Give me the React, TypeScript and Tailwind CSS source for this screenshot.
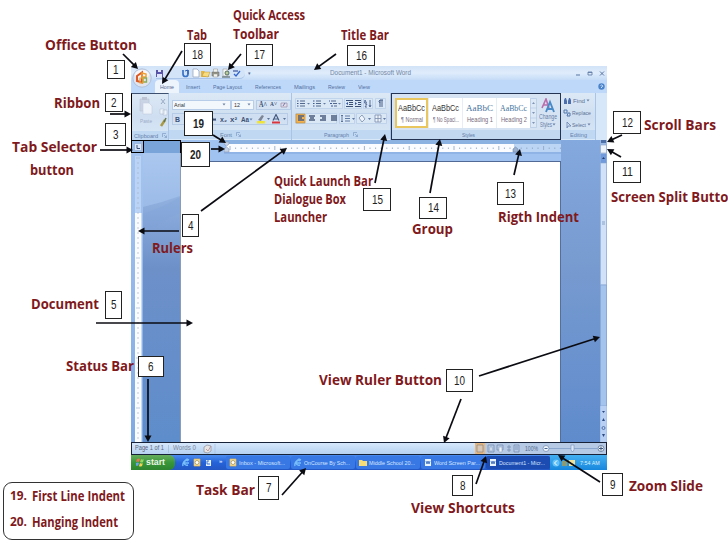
import type { ReactNode } from 'react';
import { clsx } from 'clsx';

type FitProps = { text: string; w: number; size: number; weight?: number; family?: string; className?: string };
type Label = { text: string; x: number; y: number; w: number };
type NumberBox = { n: string; x: number; y: number; w: number; h: number; bold?: boolean };
type IconProps = { children: ReactNode; w?: number; h?: number };

const labels: Label[] = [
  { text: 'Office Button', x: 45, y: 45, w: 92 },
  { text: 'Tab', x: 187, y: 35, w: 20 },
  { text: 'Quick Access', x: 233, y: 15, w: 72 },
  { text: 'Toolbar', x: 233, y: 34, w: 46 },
  { text: 'Title Bar', x: 341, y: 35, w: 48 },
  { text: 'Ribbon', x: 54, y: 103, w: 46 },
  { text: 'Tab Selector', x: 12, y: 147, w: 85 },
  { text: 'button', x: 30, y: 170, w: 44 },
  { text: 'Quick Launch Bar', x: 274, y: 181, w: 99 },
  { text: 'Dialogue Box', x: 274, y: 199, w: 72 },
  { text: 'Launcher', x: 274, y: 217, w: 53 },
  { text: 'Group', x: 412, y: 229, w: 41 },
  { text: 'Rigth Indent', x: 498, y: 217, w: 81 },
  { text: 'Scroll Bars', x: 644, y: 125, w: 72 },
  { text: 'Screen Split Button', x: 611, y: 197, w: 126 },
  { text: 'Rulers', x: 152, y: 248, w: 41 },
  { text: 'Document', x: 31, y: 304, w: 68 },
  { text: 'Status Bar', x: 66, y: 366, w: 68 },
  { text: 'View Ruler Button', x: 319, y: 380, w: 123 },
  { text: 'Task Bar', x: 196, y: 490, w: 59 },
  { text: 'View Shortcuts', x: 411, y: 508, w: 104 },
  { text: 'Zoom Slide', x: 629, y: 486, w: 74 }
];

const boxes: NumberBox[] = [
  { n: '1', x: 107, y: 60, w: 18, h: 19 },
  { n: '2', x: 105, y: 93, w: 18, h: 19 },
  { n: '3', x: 105, y: 123, w: 21, h: 23 },
  { n: '4', x: 182, y: 214, w: 17, h: 23 },
  { n: '5', x: 105, y: 291, w: 17, h: 28 },
  { n: '6', x: 138, y: 356, w: 26, h: 21 },
  { n: '7', x: 258, y: 476, w: 21, h: 24 },
  { n: '8', x: 452, y: 475, w: 21, h: 21 },
  { n: '9', x: 602, y: 473, w: 21, h: 23 },
  { n: '10', x: 446, y: 369, w: 27, h: 23 },
  { n: '11', x: 613, y: 161, w: 28, h: 22 },
  { n: '12', x: 613, y: 111, w: 28, h: 23 },
  { n: '13', x: 497, y: 182, w: 27, h: 23 },
  { n: '14', x: 419, y: 197, w: 28, h: 22 },
  { n: '15', x: 363, y: 188, w: 28, h: 23 },
  { n: '16', x: 347, y: 45, w: 28, h: 21 },
  { n: '17', x: 246, y: 44, w: 27, h: 22 },
  { n: '18', x: 184, y: 43, w: 27, h: 23 },
  { n: '19', x: 184, y: 111, w: 29, h: 25, bold: true },
  { n: '20', x: 181, y: 142, w: 29, h: 25, bold: true }
];

// x1, y1 is the tail and x2, y2 the tip
const arrows: number[][] = [
  [123, 54, 138, 69],
  [182, 51, 162, 84],
  [241, 54, 228, 70],
  [336, 54, 314, 70],
  [110, 114, 131, 114],
  [100, 150, 133, 150],
  [213, 135, 226, 143],
  [211, 149, 225, 149],
  [201, 211, 287, 148],
  [179, 231, 138, 231],
  [96, 323, 193, 323],
  [148, 379, 148, 442],
  [282, 495, 306, 468],
  [476, 484, 486, 456],
  [600, 482, 558, 455],
  [461, 399, 444, 443],
  [479, 376, 600, 337],
  [621, 157, 607, 149],
  [622, 135, 607, 142],
  [514, 175, 520, 149],
  [430, 193, 440, 139],
  [375, 183, 385, 134]
];

const tabs = [
  { text: 'Insert', w: 14, gap: 'ml-[7px]' },
  { text: 'Page Layout', w: 29, gap: 'ml-[13px]' },
  { text: 'References', w: 26, gap: 'ml-[13px]' },
  { text: 'Mailings', w: 21, gap: 'ml-[13px]' },
  { text: 'Review', w: 17, gap: 'ml-[13px]' },
  { text: 'View', w: 12, gap: 'ml-[13px]' }
];

const styles = [
  { name: '¶ Normal', sample: 'AaBbCc', active: true },
  { name: '¶ No Spaci...', sample: 'AaBbCc' },
  { name: 'Heading 1', sample: 'AaBbC', heading: true },
  { name: 'Heading 2', sample: 'AaBbCc', heading: true }
];

const tasks = [
  { text: 'Inbox - Microsoft...', icon: 'outlook' },
  { text: 'OnCourse By Sch...', icon: 'ie' },
  { text: 'Middle School 20...', icon: 'folder' },
  { text: 'Word Screen Par...', icon: 'word' },
  { text: 'Document1 - Micr...', icon: 'word', active: true }
];

const ctx = document.createElement('canvas').getContext('2d')!;

// Squeezes a line of text into an exact width
function Fit({ text, w, size, weight = 400, family = 'Liberation Sans', className }: FitProps) {
  ctx.font = `${weight} ${size}px "${family}"`;
  const scale = w / ctx.measureText(text).width;
  return (
    <span className="block shrink-0" style={{ width: w }}>
      <span
        className={clsx('block w-max origin-left whitespace-pre leading-none', className)}
        style={{ fontFamily: `"${family}", sans-serif`, fontSize: size, fontWeight: weight, transform: `scaleX(${scale})` }}
      >
        {text}
      </span>
    </span>
  );
}

function Icon({ children, w = 8, h = 8 }: IconProps) {
  return (
    <svg width={w} height={h} viewBox={`0 0 ${w} ${h}`} fill="none" className="block shrink-0">
      {children}
    </svg>
  );
}

export default function App() {
  return (
    <div className="relative h-[546px] w-[728px] overflow-hidden bg-white pl-[131px] pt-[66px] font-['Liberation_Sans',sans-serif]">
      <div className="relative flex h-[404px] w-[476px] flex-col overflow-hidden">
        <TitleBar />
        <TabRow />
        <Ribbon />
        <Workspace />
        <StatusBar />
        <TaskBar />
        <OfficeButton />
      </div>
      <Callouts />
      <Legend />
    </div>
  );
}

function OfficeButton() {
  return (
    <div className="absolute left-px top-0.5">
      <Icon w={20} h={20}>
        <circle cx="10" cy="10" r="9.200" fill="#dfe4ee" stroke="#a7b6d0" strokeWidth=".8" />
        <ellipse cx="10" cy="6.500" rx="7" ry="4.500" fill="#f6f7fb" />
        <path d="M5 8l5-3.500v10L5 13z" stroke="#dc5a26" strokeWidth="2" />
        <path d="M10 5l4 1v3h-4z" stroke="#efa033" strokeWidth="1.500" />
        <path d="M11 10h3.500v4H11z" stroke="#8aac55" strokeWidth="1.300" />
        <path d="M8 10h3v5H8z" stroke="#e9a53c" strokeWidth="1.200" />
      </Icon>
    </div>
  );
}

function TitleBar() {
  return (
    <div className="flex h-[14px] shrink-0 items-center bg-linear-to-b from-[#d2e3f8] via-[#dfecfb] to-[#c5dcf7] pl-[25px] pr-px">
      <div className="flex h-[11px] w-[89px] items-center rounded-r-full border-b border-[#a9c4e8] bg-[#d4e4f8]">
        <Icon w={86} h={10}>
          <path d="M0 2h7v7H0z" fill="#5955a8" />
          <path d="M2 2h3v2H2zM1 6h5v3H1z" fill="#dfe6fa" />
          <path d="M27 2v4a2.500 2.500 0 0 0 5 0V2" stroke="#3973c7" strokeWidth="1.700" />
          <path d="M29 3l3-1v4" stroke="#305cb0" />
          <path d="M37 1h4l2 2v6h-6z" fill="#fff" stroke="#8d9dbb" strokeWidth=".7" />
          <path d="M45 3h3l1 1h4v5h-8z" fill="#e8b63f" />
          <path d="M46 8l2-4h6l-2 5z" fill="#f8dc7d" stroke="#a78230" strokeWidth=".4" />
          <path d="M56 4h7v4h-7z" fill="#9a9a8c" stroke="#666" strokeWidth=".5" />
          <path d="M57.500 1h4v3h-4zM57.500 6h4v3h-4z" fill="#f3f3ee" stroke="#777" strokeWidth=".4" />
          <path d="M67 1h4l1 2v5h-5z" fill="#f7f7f7" stroke="#777" strokeWidth=".4" />
          <circle cx="71" cy="5" r="2" fill="#b8cc9c" stroke="#3f5850" strokeWidth=".8" />
          <path d="M66 9h8" stroke="#455" />
          <path d="M77 3h5" stroke="#475ba0" strokeWidth="1.300" />
          <path d="M78 6l2 2 4-5" stroke="#3566cc" strokeWidth="1.300" />
        </Icon>
      </div>
      <span className="ml-[3px] w-[82px] text-[5px] leading-none text-[#4d6a98]">▾</span>
      <Fit text="Document1 - Microsoft Word" w={81} size={7.5} className="text-[#7487a5]" />
      <span className="ml-auto">
        <Icon w={34} h={9}>
          <path d="M4 6h4" stroke="#5b76a3" />
          <path d="M16 3h4v3h-4zM16 3.500h4" stroke="#5b76a3" strokeWidth=".8" />
          <path d="M28 2.500l4 4m0-4l-4 4" stroke="#5b76a3" />
        </Icon>
      </span>
    </div>
  );
}

function TabRow() {
  return (
    <div className="flex h-[13px] shrink-0 items-center bg-[#bdd8f9] pl-6">
      <div className="flex h-[13px] w-[24px] items-center justify-center rounded-t-sm bg-[#edf4fc]">
        <Fit text="Home" w={14} size={6} className="text-[#53678d]" />
      </div>
      {tabs.map((tab) => (
        <div key={tab.text} className={tab.gap}>
          <Fit text={tab.text} w={tab.w} size={6} className="text-[#54709f]" />
        </div>
      ))}
      <span className="ml-auto mr-0.5">
        <Icon w={7} h={7}>
          <circle cx="3.500" cy="3.500" r="3.200" fill="#4a83c9" />
          <path d="M2.500 2.500q1-1 2 0t-1 1.500v1" stroke="#e4f0ff" strokeWidth=".8" />
        </Icon>
      </span>
    </div>
  );
}

function Group({ title, w, className, children }: { title: string; w: number; className: string; children: ReactNode }) {
  return (
    <div className={clsx('flex h-[47px] shrink-0 flex-col border-r border-[#a9c5e5]', className)}>
      <div className="h-[37px]">{children}</div>
      <div className="flex h-[9px] items-center justify-center bg-[#c0d8f1]">
        <Fit text={title} w={w} size={6} className="text-[#6582ad]" />
        {title !== 'Editing' && (
          <span className="ml-1">
            <Icon w={5} h={5}>
              <path d="M.5 4V.500H4M2 2l2.500 2.500V2.500M4.500 4.500h-2" stroke="#7f9cc6" strokeWidth=".7" />
            </Icon>
          </span>
        )}
      </div>
    </div>
  );
}

function Ribbon() {
  return (
    <div className="flex h-[47px] shrink-0 bg-linear-to-b from-[#dce8f5] via-[#cfdff1] to-[#d9e8f8]">
      <Group title="Clipboard" w={24} className="w-[38px] border-l border-l-black border-t border-t-[#3d506f]">
        <div className="flex gap-1.5 pl-[7px] pt-[3px]">
          <div className="flex flex-col items-center gap-0.5 opacity-60">
            <Icon w={14} h={19}>
              <path d="M1 2h9v12H1z" fill="#c3c9dc" stroke="#a6afc5" strokeWidth=".6" />
              <path d="M3 0h5v3H3z" fill="#a9afbf" />
              <path d="M4 6h6l3 3v8H4z" fill="#fff" stroke="#b9c1d3" strokeWidth=".6" />
            </Icon>
            <Fit text="Paste" w={12} size={6} className="text-[#7a89a6]" />
          </div>
          <Icon w={9} h={32}>
            <path d="M2 2l4 5M6 2L2 7" stroke="#98a8c4" />
            <path d="M1 12h4v5H1zM4 13h4v5H4z" fill="#f0f5fc" stroke="#b3bfd4" strokeWidth=".6" />
            <path d="M2 29l4-6" stroke="#a99a45" strokeWidth="2.500" />
            <path d="M5 25l2-4" stroke="#62754e" strokeWidth="1.500" />
          </Icon>
        </div>
      </Group>
      <Group title="Font" w={12} className="w-[123px]">
        <div className="flex h-[19px] items-center pl-[3px] pt-1">
          <div className="flex h-[10px] w-[61px] items-center justify-between border border-[#b8cde8] bg-[#f3f8fd] pl-px pr-1">
            <Fit text="Arial" w={11} size={6} className="text-[#333]" />
            <Chevron />
          </div>
          <div className="flex h-[10px] w-[23px] items-center justify-between border border-[#b8cde8] bg-[#f3f8fd] px-0.5">
            <Fit text="12" w={6} size={6} className="text-[#333]" />
            <Chevron />
          </div>
          <div className="ml-0.5 flex items-center gap-[3px] border border-[#b6cbe6] px-0.5 text-[#3b4e70]">
            <Fit text="A˄" w={8} size={8} weight={700} family="Liberation Serif" />
            <Fit text="A˅" w={7} size={7} weight={700} family="Liberation Serif" />
            <Icon w={8} h={8}>
              <path d="M1 2h6v4H1z" fill="#e7dce9" stroke="#9a8cab" strokeWidth=".7" />
              <path d="M3 5l2-3" stroke="#657caa" />
            </Icon>
          </div>
        </div>
        <div className="mx-[3px] mt-px flex h-[12px] items-center border border-[#b6cbe6] text-[#3e5276]">
          <Fit text="B" w={5} size={7} weight={700} className="ml-0.5" />
          <span className="w-[34px]" />
          <Fit text="abc" w={6} size={6} weight={700} className="line-through" />
          <span className="w-1" />
          <Fit text="x₂" w={7} size={7} weight={700} />
          <span className="w-1" />
          <Fit text="x²" w={7} size={7} weight={700} />
          <span className="w-1" />
          <Fit text="Aa" w={8} size={7} weight={700} />
          <Chevron />
          <span className="w-0.5" />
          <Icon w={32} h={10}>
            <path d="M2 7h8v2.500H2z" fill="#f0e33a" />
            <path d="M3 6l4-5 2 1-3 5z" fill="#7d8694" />
            <path d="M12 4h3l-1.500 2z" fill="#5a7198" />
            <path d="M17 7.500h8v2h-8z" fill="#d8343d" />
            <path d="M18 6.500l3-6 3 6M19 5h4" stroke="#455a80" strokeWidth="1.200" />
            <path d="M28 4h3l-1.500 2z" fill="#5a7198" />
          </Icon>
        </div>
      </Group>
      <Group title="Paragraph" w={25} className="w-[99px]">
        <ParagraphTools />
      </Group>
      <StyleGallery />
      <Group title="Editing" w={17} className="w-[35px]">
        <div className="flex flex-col gap-[5px] pl-0.5 pt-1 text-[#5c7296]">
          <div className="flex h-[7px] items-center gap-px">
            <Icon w={9} h={8}>
              <path d="M1 7V3l1-2h1l1 3v3zM5 7V4l1-3h1l1 2v4z" fill="#4a6eae" />
            </Icon>
            <Fit text="Find" w={12} size={6} />
            <Chevron />
          </div>
          <div className="flex h-[7px] items-center gap-px">
            <Icon w={8} h={8}>
              <path d="M1 1h3v3H1zM5 4h2v3H4z" stroke="#5376ac" />
            </Icon>
            <Fit text="Replace" w={19} size={6} />
          </div>
          <div className="flex h-[7px] items-center gap-px">
            <Icon w={8} h={8}>
              <path d="M4 1v6l1-2h3z" stroke="#6a83ad" strokeWidth=".8" />
            </Icon>
            <Fit text="Select" w={14} size={6} />
            <Chevron />
          </div>
        </div>
      </Group>
      <div className="flex-1 bg-[#d7e7fa]" />
    </div>
  );
}

function Chevron() {
  return (
    <Icon w={4} h={3}>
      <path d="M.5.500h3L2 2.500z" fill="#6980a5" />
    </Icon>
  );
}

function ParagraphTools() {
  return (
    <div className="pl-[3px] pt-[5px]">
      <Icon w={94} h={31}>
        <path d="M.5.500h47v10H.500zM49.500.500h17v10h-17zM68.500.500h9v10h-9zM80.500.500h10v10h-10z" fill="#dae7f5" stroke="#b5cbe7" strokeWidth=".7" />
        <path d="M5 3h5M5 5.500h5M5 8h5M21 3h5M21 5.500h5M21 8h5M36 3h5M38 5.500h4M39 8h3" stroke="#51678d" />
        <path d="M2 3h1.500M2 5.500h1.500M2 8h1.500M18 3h1.500M18 5.500h1.500M18 8h1.500M34 3h1M35 5.500h2M36 8h2" stroke="#3b5795" />
        <path d="M12 5h3l-1.500 1.500zM28 5h3l-1.500 1.500zM43 5h3l-1.500 1.500z" fill="#607aa4" />
        <path d="M51 2.500h7M54 4.500h4M54 6.500h4M51 8.500h7M60 2.500h6M63 4.500h3M63 6.500h3M60 8.500h6" stroke="#3c5278" />
        <path d="M53 4l-2 1.500 2 1.500zM60 4l2 1.500-2 1.500z" fill="#31569d" />
        <path d="M70 2l1.500 3h-2zM70 6h2l-2 3h2M75 2v7m-1-2l1 2 1-2" stroke="#4c6598" strokeWidth=".9" />
        <path d="M87 2v7m-2-7v7m3-7h-3q-2 1.500 0 3" stroke="#455c88" />
        <path d="M.5 15.500h41v10H.500zM44.500 15.500h15v10h-15zM61.500 15.500h30v10h-30z" fill="#dae7f5" stroke="#b5cbe7" strokeWidth=".7" />
        <path d="M1 16h9v9H1z" fill="#f3b24f" stroke="#ba8738" strokeWidth=".6" />
        <path d="M3 18h6M3 20h4M3 22h6M14 18h6M15 20h4M14 22h6M25 18h6M27 20h4M25 22h6M36 18h6M36 20h6M36 22h6" stroke="#4b5d7f" strokeWidth="1.300" />
        <path d="M47 17v7m-1-6l1-1 1 1m-2 5l1 1 1-1M50 18h5M50 20.500h5M50 23h5" stroke="#526d9d" strokeWidth=".9" />
        <path d="M64 20l3-3 3 4-3 3zM80 17h6v7h-6zM83 17v7M80 20.500h6" fill="#edf3fb" stroke="#798dad" strokeWidth=".8" />
        <path d="M57 20h3l-1.500 2zM73 20h3l-1.500 2zM88 20h3l-1.500 2z" fill="#607aa4" />
      </Icon>
    </div>
  );
}

function StyleGallery() {
  return (
    <div className="flex h-[47px] w-[170px] shrink-0 flex-col border-[1.5px] border-[#243352] bg-[#d5e3f3]">
      <div className="flex h-[36px] pl-[3px] pt-1">
        <div className="flex h-[30px] items-center gap-px bg-[#e5eef8]">
          {styles.map((style) => (
            <div
              key={style.name}
              className={clsx(
                'flex h-[30px] w-[33px] flex-col items-center justify-center gap-[3px] overflow-hidden bg-white',
                style.active && 'border-2 border-[#eac65e]'
              )}
            >
              <Fit
                text={style.sample}
                w={27}
                size={9}
                family={style.heading ? 'Liberation Serif' : 'Liberation Sans'}
                className={style.heading ? 'text-[#45739d]' : 'text-[#333]'}
              />
              <Fit text={style.name} w={style.active ? 22 : 26} size={7} className="text-[#776b7c]" />
            </div>
          ))}
        </div>
        <Icon w={7} h={30}>
          <path d="M.500.500h6v29h-6zM0 10h7M0 20h7" fill="#dce8f6" stroke="#b4c9e3" strokeWidth=".7" />
          <path d="M2 6l1.500-2L5 6zM2 14l1.500 2L5 14zM2 24h3l-1.500 2z" fill="#8095b6" />
        </Icon>
        <div className="flex w-[22px] flex-col items-center text-[#6880a6]">
          <Icon w={15} h={16}>
            <path d="M1 10L5 1l3 9M2 7h5" stroke="#ba6dab" strokeWidth="1.600" />
            <path d="M5 14l4-10 4 10M6.500 11h5" stroke="#4889c7" strokeWidth="1.900" />
          </Icon>
          <Fit text="Change" w={18} size={6.500} />
          <div className="mt-px flex items-center">
            <Fit text="Styles" w={12} size={6.500} />
            <Chevron />
          </div>
        </div>
      </div>
      <div className="flex flex-1 items-center justify-center bg-[#c2d8f0]">
        <Fit text="Styles" w={13} size={6} className="text-[#607ba6]" />
        <span className="w-4" />
      </div>
    </div>
  );
}

function Workspace() {
  const ticks = Array.from({ length: 75 }, (_, i) => i);
  return (
    <div className="flex h-[302px] shrink-0 bg-linear-to-b from-[#8db1e2] from-0% via-[#7295cd] via-38% to-[#5f8fce]">
      <div className="flex w-[50px] flex-col">
        <div className="flex h-[13px] border-t border-black">
          <div className="flex w-[13px] items-center justify-center border border-t-0 border-black bg-[#9dbde9]">
            <Icon w={8} h={8}>
              <path d="M.5.500h7v7h-7z" fill="#d8e6f8" stroke="#92aed5" strokeWidth=".7" />
              <path d="M3 2v3.500h3" stroke="#394c77" />
            </Icon>
          </div>
          <div className="flex-1 border-r border-black bg-[#79a4da]" />
        </div>
        <div className="flex flex-1">
          <div className="w-3 bg-linear-to-b from-[#a5c5f0] to-[#7faae2]">
            <svg width="12" height="289" viewBox="0 0 12 289">
              <path d="M4 3h6v57H4z" fill="#bbd3f4" />
              <path d="M4 60h6v229H4z" fill="#fafcff" />
              <path d="M10.500 60v229" stroke="#c5daf5" />
              {ticks.slice(0, 57).map((i) => (
                <path key={i} d={`M${i % 10 === 0 ? 5 : 6} ${i * 5 + 5}h${i % 10 === 0 ? 4 : 2}`} stroke="#a5b5cb" strokeWidth=".7" />
              ))}
            </svg>
          </div>
          <div className="flex-1 border-r border-[#8d9cb3] bg-linear-to-b from-[#a8c5ed] from-0% via-[#6d90c9] via-40% to-[#5e8dcb]">
            <svg width="37" height="85">
              <path d="M0 85V61Q20 54 37 44V60Q20 66 0 85" fill="#7da2d7" opacity=".3" />
              <path d="M0 0h37v43Q18 50 0 54z" fill="#acc9f1" opacity=".5" />
            </svg>
          </div>
        </div>
      </div>
      <div className="flex w-[380px] flex-col">
        <div className="h-[22px] border-b border-[#526b96] bg-[#a0c2f0] pl-[43px]">
          <svg width="337" height="21" viewBox="0 0 337 21">
            <path d="M0 0h337v4H0z" fill="#8bb2e0" />
            <path d="M2 4h288v8H2z" fill="#fafcff" />
            <path d="M290 4h47v8h-47z" fill="#bcd5f5" />
            <path d="M0 13h337" stroke="#80a5db" />
            {ticks.slice(0, 60).map((i) => (
              <path key={i} d={`M${i * 5.6 + 6} ${i % 8 === 0 ? 6 : 7.5}v${i % 8 === 0 ? 4 : 1.5}`} stroke="#8ca1bf" strokeWidth=".8" />
            ))}
            <path d="M0 2h5v2L2.500 6 0 4zM0 12V9l2.500-2L5 9v3z" fill="#c7d3e7" stroke="#8496b5" strokeWidth=".6" />
            <path d="M289 12V9l2.500-2L294 9v3z" fill="#9bb0cf" stroke="#7187a8" strokeWidth=".6" />
          </svg>
        </div>
        <div className="flex-1 border-r-[1.5px] border-[#526f9e] bg-white" />
      </div>
      <div className="w-[39px] bg-linear-to-b from-[#84a9df] from-0% via-[#789bd0] via-40% to-[#5f8bcc]" />
      <div className="w-[7px] bg-[#99b9e5]">
        <svg width="7" height="302" viewBox="0 0 7 302">
          <path d="M1 0h5v3H1z" fill="#4d70a8" />
          <path d="M.5 5h6v8h-6z" fill="#edf4fc" stroke="#879fc3" strokeWidth=".6" />
          <path d="M.5 14h6v9h-6z" fill="#709adb" />
          <path d="M2 19l1.500-2L5 19z" fill="#223d70" />
          <path d="M.5 23h6v122h-6z" fill="#d1e2f8" stroke="#8ca9d1" strokeWidth=".6" />
          <path d="M2 82h3M2 84h3" stroke="#6586b7" strokeWidth=".7" />
          <path d="M.5 145h6v121h-6z" fill="#a4c3ed" stroke="#7c9ecf" strokeWidth=".6" />
          <path d="M.5 266h6v36h-6z" fill="#b7d0f4" />
          <path d="M2 271h3l-1.500 2zM2 281l1.500-3L5 281zM2 294h3l-1.500 3z" fill="#304c83" />
          <circle cx="3.500" cy="288" r="1.500" stroke="#3d5e95" fill="none" strokeWidth=".8" />
        </svg>
      </div>
    </div>
  );
}

function StatusBar() {
  return (
    <div className="flex h-[13px] shrink-0 items-center border border-[#172138] bg-linear-to-b from-[#d6e8fb] to-[#b6d1f1] pl-[3px]">
      <Fit text="Page 1 of 1" w={29} size={6.5} className="text-[#5b6679]" />
      <span className="mx-1 h-2 w-px bg-[#abc3df]" />
      <Fit text="Words 0" w={23} size={6.5} className="text-[#7b8799]" />
      <span className="ml-[7px]">
        <Icon w={13} h={10}>
          <path d="M1 3l3-2 4 1v5l-3 2-4-1z" fill="#e8e5e5" stroke="#8a8e9b" strokeWidth=".7" />
          <path d="M3 5l2 2 3-5" stroke="#b58a92" strokeWidth=".8" />
          <path d="M12 0v10" stroke="#a8bfdd" strokeWidth=".7" />
        </Icon>
      </span>
      <div className="ml-auto flex h-[11px] items-center bg-[#b6cae6]">
        <Icon w={46} h={11}>
          <path d="M0 0h10v11H0z" fill="#e4b783" />
          <path d="M2 2h6v7H2z" fill="#d8c6b6" stroke="#8d867e" strokeWidth=".7" />
          <path d="M13 2h6v7h-6zM22 2h6v5h-6zM34 2v7m-2-5h4m-4 3h4M39 2h5v7h-5zM40 4h3M40 6h3" stroke="#788eae" strokeWidth=".8" />
          <path d="M15 4h2v4h-2zM24 4h3v5h-3z" fill="#f0f4fb" stroke="#8da3bf" strokeWidth=".6" />
        </Icon>
        <span className="w-1" />
        <Fit text="100%" w={13} size={7} className="text-[#526786]" />
        <Icon w={68} h={11}>
          <path d="M11 5.500h48" stroke="#8ca7cd" />
          <circle cx="8" cy="5.500" r="3" fill="#eff5fc" stroke="#6e87aa" strokeWidth=".7" />
          <path d="M6.500 5.500h3" stroke="#46648e" />
          <path d="M33 2h3v5l-1.500 2L33 7z" fill="#dce8f8" stroke="#819bc1" strokeWidth=".7" />
          <circle cx="63" cy="5.500" r="3" fill="#eff5fc" stroke="#566e90" strokeWidth=".8" />
          <path d="M61 5.500h4M63 3.500v4" stroke="#3c557c" />
        </Icon>
      </div>
    </div>
  );
}

function TaskIcon({ name }: { name: string }) {
  return (
    <Icon w={8} h={9}>
      {name === 'ie' && <path d="M7 5H2q1 3 4 2M1 8q-1-4 4-7l2 1M2 5q1-4 4-2" stroke="#78bdfa" strokeWidth="1.400" />}
      {name === 'outlook' && (
        <>
          <path d="M1 1h6v7H1z" fill="#f2dfa1" stroke="#e8b54c" strokeWidth=".7" />
          <circle cx="4" cy="4.500" r="2" fill="#fff" stroke="#8e8660" strokeWidth=".7" />
        </>
      )}
      {name === 'folder' && <path d="M0 2h3l1 1h4v5H0z" fill="#f4dd79" />}
      {name === 'desktop' && (
        <>
          <path d="M2 2h5v6H2z" fill="#e4f1ff" />
          <path d="M5 3H3v3h3" stroke="#3f74cd" />
        </>
      )}
      {name === 'word' && (
        <>
          <path d="M1 1h6v7H1z" fill="#e9f4ff" />
          <path d="M2 3l1 3 1-3 1 3 1-3" stroke="#2d62b4" strokeWidth=".8" />
        </>
      )}
    </Icon>
  );
}

function TaskBar() {
  return (
    <div className="flex h-[15px] shrink-0 items-center bg-linear-to-b from-[#4b8cf0] via-[#2563d9] to-[#2457c4]">
      <div className="flex h-[15px] w-11 items-center gap-px rounded-r-md bg-linear-to-b from-[#67ae5d] via-[#38973a] to-[#2e842f] pl-[5px]">
        <Icon w={9} h={9}>
          <path d="M1 1q2-1 3 0L3 4Q2 3 0 4z" fill="#ec7253" />
          <path d="M5 1q2 1 3 0L7 4Q6 5 4 4z" fill="#94d861" />
          <path d="M0 5q2-1 3 0L2 8Q1 7 0 8z" fill="#69a5ef" />
          <path d="M4 5q2 1 3 0L6 8Q4 9 3 8z" fill="#f1d34f" />
        </Icon>
        <Fit text="start" w={19} size={9} weight={700} className="-mt-px text-[#edf5e6]" />
      </div>
      <div className="flex w-[51px] items-center gap-[3px] pl-[7px]">
        <TaskIcon name="ie" />
        <TaskIcon name="outlook" />
        <TaskIcon name="desktop" />
        <span className="-mt-1 ml-1 text-[6px] leading-none text-white">»</span>
      </div>
      <div className="flex gap-px">
        {tasks.map((task) => (
          <div
            key={task.text}
            className={clsx(
              'flex h-[13px] w-16 items-center gap-0.5 rounded-xs pl-[3px]',
              task.active ? 'bg-[#1c4bb2]' : 'bg-[#3778e5]'
            )}
          >
            <TaskIcon name={task.icon} />
            <Fit text={task.text} w={46} size={6} className="text-[#d4e5ff]" />
          </div>
        ))}
      </div>
      <div className="flex h-[15px] flex-1 items-center justify-end gap-1 bg-linear-to-b from-[#43aff1] to-[#1687dd] pr-[7px]">
        <Icon w={25} h={10}>
          <circle cx="5" cy="5" r="3.500" fill="#63c2f7" />
          <path d="M6 2.500L3.500 5 6 7.500" stroke="#fff" />
          <path d="M11 3h5v5h-5z" fill="#8b9b74" />
          <path d="M18 2h6v6h-6z" fill="#eee19a" />
        </Icon>
        <Fit text="7:54 AM" w={20} size={6} className="text-[#dbf2ff]" />
      </div>
    </div>
  );
}

function Callouts() {
  return (
    <>
      <svg className="pointer-events-none absolute inset-0" width="728" height="546" viewBox="0 0 728 546">
        {arrows.map(([x1, y1, x2, y2]) => {
          const angle = (Math.atan2(y2 - y1, x2 - x1) * 180) / Math.PI;
          const len = Math.hypot(x2 - x1, y2 - y1);
          return (
            <g key={`${x1}-${y1}`} transform={`translate(${x2} ${y2}) rotate(${angle})`}>
              <path d={`M${-len} 0H-4`} stroke="#0b0b12" strokeWidth="1.700" />
              <path d="M0 0L-6.500-3.500V3.500z" fill="#0b0b12" />
            </g>
          );
        })}
      </svg>
      {boxes.map((box) => (
        <div
          key={box.n}
          className="absolute flex items-center justify-center border border-[#222] bg-white"
          style={{ left: box.x, top: box.y, width: box.w, height: box.h }}
        >
          <Fit text={box.n} w={box.n.length * 5.5} size={12} weight={box.bold ? 700 : 400} className="text-[#222]" />
        </div>
      ))}
      {labels.map((label) => (
        <div key={label.text} className="absolute" style={{ left: label.x, top: label.y - 7 }}>
          <Fit text={label.text} w={label.w} size={14} weight={700} family="Open Sans" className="text-[#80191c]" />
        </div>
      ))}
    </>
  );
}

function Legend() {
  return (
    <div className="absolute left-[3px] top-[482px] flex h-[58px] w-[131px] flex-col gap-3 rounded-[9px] border border-[#333] pl-1.5 pt-[6px] text-[#80191c]">
      <div className="flex gap-[5px]">
        <Fit text="19." w={17} size={13} weight={700} family="Open Sans" />
        <Fit text="First Line Indent" w={93} size={14} weight={700} family="Open Sans" />
      </div>
      <div className="flex gap-[5px]">
        <Fit text="20." w={17} size={13} weight={700} family="Open Sans" />
        <Fit text="Hanging Indent" w={86} size={14} weight={700} family="Open Sans" />
      </div>
    </div>
  );
}
